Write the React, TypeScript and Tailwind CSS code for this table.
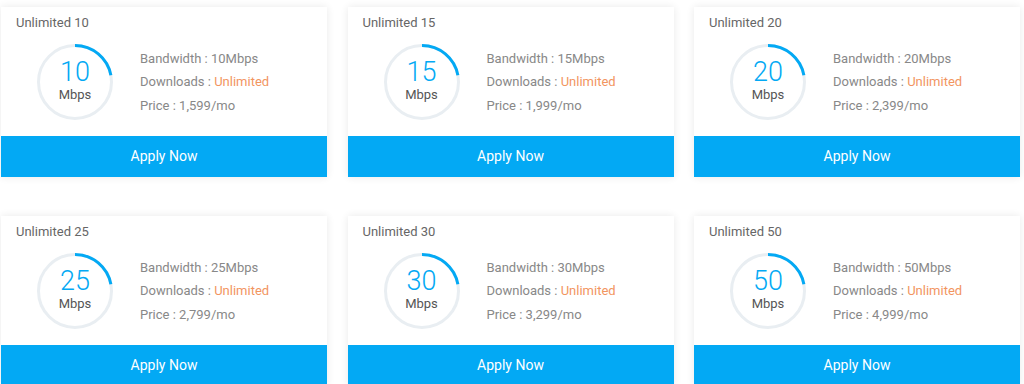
const plans = [
  { name: "Unlimited 10", speed: 10, price: "1,599" },
  { name: "Unlimited 15", speed: 15, price: "1,999" },
  { name: "Unlimited 20", speed: 20, price: "2,399" },
  { name: "Unlimited 25", speed: 25, price: "2,799" },
  { name: "Unlimited 30", speed: 30, price: "3,299" },
  { name: "Unlimited 50", speed: 50, price: "4,999" },
]

function SpeedRing({ speed }: { speed: number }) {
  const r = 36.5
  const c = 2 * Math.PI * r
  const arc = c * 0.22

  return (
    <div className="relative w-[76px] h-[76px] shrink-0">
      <svg width="76" height="76" viewBox="0 0 76 76" className="-rotate-90">
        <circle cx="38" cy="38" r={r} fill="none" stroke="#e9eef2" strokeWidth="3" />
        <circle
          cx="38"
          cy="38"
          r={r}
          fill="none"
          stroke="#03a9f4"
          strokeWidth="3"
          strokeDasharray={`${arc} ${c}`}
        />
      </svg>
      <div className="absolute inset-0 flex flex-col items-center justify-center">
        <span className="text-[27px] leading-[26px] font-light text-[#03a9f4] mt-[-3px]">{speed}</span>
        <span className="text-[13px] leading-[16px] text-[#555] mt-[2px]">Mbps</span>
      </div>
    </div>
  )
}

export default function App() {
  return (
    <div className="bg-white min-h-[384px] px-[1px] pt-[7px] font-['Roboto',sans-serif]">
      <div className="grid grid-cols-[326px_326px_326px] gap-x-[20.5px] gap-y-[39px]">
        {plans.map((p) => (
          <div key={p.name} className="bg-white shadow-[0_0_8px_rgba(0,0,0,0.09)]">
            <div className="h-[129px] px-[15px] pt-[8px]">
              <div className="text-[13px] leading-[16px] text-[#666]">{p.name}</div>
              <div className="flex items-center mt-[13px] ml-[21px] gap-[27px]">
                <SpeedRing speed={p.speed} />
                <div className="text-[13px] leading-[23.5px] text-[#888]">
                  <div>Bandwidth : {p.speed}Mbps</div>
                  <div>
                    Downloads : <span className="text-[#f2955f]">Unlimited</span>
                  </div>
                  <div>Price : {p.price}/mo</div>
                </div>
              </div>
            </div>
            <button className="w-full h-[41px] bg-[#03a9f4] text-white text-[14px] flex items-center justify-center">
              Apply Now
            </button>
          </div>
        ))}
      </div>
    </div>
  )
}
